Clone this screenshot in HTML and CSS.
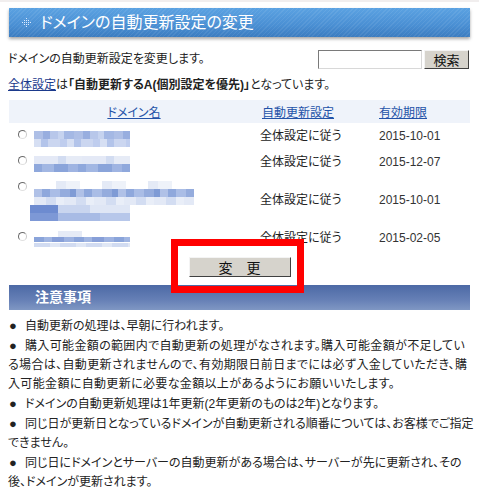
FILE: index.html
```html
<!DOCTYPE html>
<html lang="ja">
<head>
<meta charset="utf-8">
<title>ドメインの自動更新設定の変更</title>
<link rel="stylesheet" href="styles.css">
</head>
<body>
<div class="topline"></div>
<div class="page">
  <div class="title-bar">
    <svg class="title-icon" width="9" height="9" viewBox="0 0 9 9">
      <g fill="#dbeaff">
        <rect x="4" y="0" width="1" height="1"/>
        <rect x="2" y="2" width="1" height="1"/><rect x="4" y="2" width="1" height="1"/><rect x="6" y="2" width="1" height="1"/>
        <rect x="0" y="4" width="1" height="1"/><rect x="2" y="4" width="1" height="1"/><rect x="4" y="4" width="1" height="1"/><rect x="6" y="4" width="1" height="1"/><rect x="8" y="4" width="1" height="1"/>
        <rect x="2" y="6" width="1" height="1"/><rect x="4" y="6" width="1" height="1"/><rect x="6" y="6" width="1" height="1"/>
        <rect x="4" y="8" width="1" height="1"/>
      </g>
    </svg>
    <h1 class="title-text">ドメインの自動更新設定の変更</h1>
  </div>

  <div class="intro-row">
    <p class="intro-text">ドメインの自動更新設定を変更します。</p>
    <form class="search">
      <input class="search-input" type="text">
      <button class="search-btn" type="button">検索</button>
    </form>
  </div>

  <p class="status-line"><a class="link-dark" href="#">全体設定</a>は<b class="strong">「自動更新するA(個別設定を優先)」</b>となっています。</p>

  <div class="table">
    <div class="thead">
      <div class="th th-name"><a class="link" href="#">ドメイン名</a></div>
      <div class="th th-auto"><a class="link" href="#">自動更新設定</a></div>
      <div class="th th-date"><a class="link" href="#">有効期限</a></div>
    </div>

    <div class="tr">
      <div class="td-name"><span class="radio"></span><span class="blur blur-a"></span></div>
      <div class="td td-auto">全体設定に従う</div>
      <div class="td td-date">2015-10-01</div>
    </div>
    <div class="tr">
      <div class="td-name"><span class="radio"></span><span class="blur blur-b"></span></div>
      <div class="td td-auto">全体設定に従う</div>
      <div class="td td-date">2015-12-07</div>
    </div>
    <div class="tr tr-tall">
      <div class="td-name"><span class="radio"></span><span class="blur blur-c"><span class="blur-c-top"></span><span class="blur-c-bottom"></span></span></div>
      <div class="td td-auto">全体設定に従う</div>
      <div class="td td-date">2015-10-01</div>
    </div>
    <div class="tr">
      <div class="td-name"><span class="radio"></span><span class="blur blur-d"></span></div>
      <div class="td td-auto">全体設定に従う</div>
      <div class="td td-date">2015-02-05</div>
    </div>
  </div>

  <div class="submit-row">
    <div class="submit-wrap">
      <button class="submit-btn" type="button">変　更</button>
      <span class="highlight"></span>
    </div>
  </div>

  <div class="notice-bar">注意事項</div>
  <ul class="notes">
    <li><span class="bullet">●</span>自動更新の処理は、早朝に行われます。</li>
    <li class="wide"><span class="bullet">●</span>購入可能金額の範囲内で自動更新の処理がなされます。購入可能金額が不足してい<br>る場合は、自動更新されませんので、有効期限日前日までには必ず入金していただき、購<br>入可能金額に自動更新に必要な金額以上があるようにお願いいたします。</li>
    <li><span class="bullet">●</span>ドメインの自動更新処理は1年更新(2年更新のものは2年)となります。</li>
    <li><span class="bullet">●</span>同じ日が更新日となっているドメインが自動更新される順番については、お客様でご指定<br>できません。</li>
    <li><span class="bullet">●</span>同じ日にドメインとサーバーの自動更新がある場合は、サーバーが先に更新され、その<br>後、ドメインが更新されます。</li>
  </ul>
</div>
</body>
</html>
```

FILE: styles.css
```css
html, body {
  margin: 0;
  padding: 0;
  background: #ffffff;
}
body {
  font-family: "Liberation Sans", "Noto Sans CJK JP", sans-serif;
  font-size: 12px;
  color: #222222;
  font-feature-settings: "palt";
}
.topline {
  height: 2px;
  background: #f1eeee;
}
.page {
  width: 463px;
  margin: 0 0 0 8px;
  padding-top: 6px;
}
.title-bar {
  margin: 0 1px;
  height: 29px;
  display: flex;
  align-items: center;
  padding-left: 13px;
  gap: 9px;
  background:
    repeating-linear-gradient(135deg, rgba(255,255,255,0.07) 0 1px, rgba(255,255,255,0) 1px 3px),
    linear-gradient(#5ba2e2, #4a8fd3 60%, #3b7cc0);
  box-shadow: 0 2px 3px rgba(0, 0, 0, 0.35);
}
.title-icon {
  flex: none;
}
.title-text {
  margin: 0;
  font-size: 16px;
  font-weight: normal;
  color: #ffffff;
  line-height: 20px;
}
.intro-row {
  margin-top: 13px;
  height: 19px;
  display: flex;
  align-items: center;
  justify-content: space-between;
}
.intro-text {
  margin: 0;
  line-height: 19px;
}
.search {
  display: flex;
  gap: 2px;
  margin-right: 2px;
}
.search-input {
  box-sizing: border-box;
  width: 104px;
  height: 19px;
  margin: 0;
  padding: 0 2px;
  border: 1px solid;
  border-color: #7a7a7a #d8d8d8 #d8d8d8 #7a7a7a;
  background: #ffffff;
}
.search-btn {
  box-sizing: border-box;
  width: 45px;
  height: 19px;
  margin: 0;
  padding: 0;
  font-family: "Noto Sans CJK JP", sans-serif;
  font-size: 13px;
  line-height: 15px;
  color: #111111;
  background: #d6d3cc;
  border: 1px solid;
  border-color: #f4f4f4 #404040 #404040 #f4f4f4;
}
.status-line {
  margin: 7px 0 0 0;
  line-height: 19px;
}
.link-dark {
  color: #1b3a8c;
  text-decoration: underline;
}
.strong {
  font-weight: bold;
}
.link {
  color: #2352a8;
  text-decoration: underline;
}
.table {
  margin: 5px 1px 0 1px;
}
.thead {
  display: grid;
  grid-template-columns: 250px 119px 1fr;
  height: 23px;
  align-items: center;
  background: #eff3fa;
}
.th-name {
  text-align: center;
}
.th-auto {
  padding-left: 3px;
}
.th-date {
  padding-left: 1px;
}
.tr {
  display: grid;
  grid-template-columns: 250px 119px 1fr;
  height: 26px;
}
.tr-tall {
  height: 50px;
}
.td {
  align-self: center;
  line-height: 16px;
}
.td-auto {
  padding-left: 1px;
}
.td-date {
  padding-left: 1px;
  color: #333333;
}
.td-name {
  display: flex;
  align-items: flex-start;
  padding-top: 6px;
  padding-left: 9px;
  gap: 7px;
}
.radio {
  flex: none;
  box-sizing: border-box;
  width: 9px;
  height: 9px;
  margin-top: 1px;
  border-radius: 50%;
  border: 1px solid;
  border-color: #6a6a6a #c8c8c8 #e0e0e0 #6a6a6a;
  background: #ffffff;
}
.blur {
  display: block;
  width: 96px;
  height: 16px;
}
.blur-a {
  margin-top: 2px;
  background:
    repeating-linear-gradient(90deg, #aebfe6 0 9px, #98aedf 9px 16px, #b8c7ea 16px 24px, #c6d3ef 24px 30px, #a4b8e4 30px 40px) top / 100% 8px no-repeat,
    repeating-linear-gradient(90deg, #d6dff3 0 7px, #b3c4ea 7px 14px, #cbd6f0 14px 26px, #bfcdee 26px 33px) bottom / 100% 8px no-repeat;
}
.blur-b {
  margin-top: 1px;
  background:
    repeating-linear-gradient(90deg, #e4e9f6 0 24px, #d2dcf1 24px 32px, #e6ebf6 32px 48px) top / 100% 8px no-repeat,
    repeating-linear-gradient(90deg, #8fa8dc 0 8px, #a2b7e3 8px 20px, #8aa4da 20px 34px, #9fb4e2 34px 44px) bottom / 100% 8px no-repeat;
}
.blur-c {
  width: 160px;
  height: 40px;
  display: flex;
  flex-direction: column;
}
.blur-c-top {
  display: block;
  height: 24px;
  background:
    repeating-linear-gradient(90deg, #ffffff 0 22px, #e4eaf6 22px 32px, #eef2f9 32px 46px) top / 100% 8px no-repeat,
    repeating-linear-gradient(90deg, #b0c1e7 0 8px, #8fa8dc 8px 16px, #aabde6 16px 26px, #95acdd 26px 36px, #7f9bd5 36px 42px) center / 100% 8px no-repeat,
    repeating-linear-gradient(90deg, #e3e9f6 0 12px, #d3ddf2 12px 22px, #e9eef8 22px 30px) bottom / 100% 8px no-repeat;
}
.blur-c-bottom {
  display: block;
  width: 100px;
  height: 16px;
  margin-left: -4px;
  background:
    linear-gradient(90deg, #6d8bd0 0 28px, #c9d5ef 28px 60px, #dfe6f5 60px 100px) top / 100% 8px no-repeat,
    linear-gradient(90deg, #7d98d6 0 28px, #a8bbe5 28px 70px, #b7c7ea 70px 100px) bottom / 100% 8px no-repeat;
  box-shadow: -18px 4px 0 -3px #ffffff;
}
.blur-d {
  background:
    repeating-linear-gradient(90deg, #ffffff 0 24px, #e6ebf6 24px 48px, #ffffff 48px 96px) top / 100% 6px no-repeat,
    repeating-linear-gradient(90deg, #8aa4da 0 10px, #a0b5e2 10px 18px, #879fd8 18px 30px, #9db2e1 30px 40px) center / 100% 6px no-repeat,
    repeating-linear-gradient(90deg, #d1dbf1 0 16px, #e0e7f5 16px 26px) bottom / 100% 4px no-repeat;
}
.submit-row {
  display: flex;
  justify-content: center;
  margin-top: 6px;
}
.submit-wrap {
  position: relative;
}
.submit-btn {
  display: block;
  box-sizing: border-box;
  width: 102px;
  height: 20px;
  margin: 0;
  padding: 0;
  font-family: "Noto Sans CJK JP", sans-serif;
  font-size: 14px;
  line-height: 16px;
  color: #111111;
  background: #d6d3cc;
  border: 1px solid;
  border-color: #f4f4f4 #404040 #404040 #f4f4f4;
}
.highlight {
  position: absolute;
  top: -18px;
  left: -18px;
  right: -13px;
  bottom: -16px;
  border: 7px solid #ff0000;
  z-index: 2;
}
.notice-bar {
  margin: 8px 1px 0 1px;
  height: 25px;
  line-height: 25px;
  padding-left: 26px;
  font-size: 14px;
  font-weight: bold;
  color: #ffffff;
  background: linear-gradient(#4c69a5, #6680b6 60%, #7f97c3);
}
.notes {
  list-style: none;
  margin: 6px 0 0 0;
  padding: 0;
}
.notes li {
  line-height: 19px;
  white-space: nowrap;
}
.notes .wide {
  letter-spacing: 0.35px;
}
.bullet {
  display: inline-block;
  width: 17px;
  padding-left: 1px;
  box-sizing: border-box;
  font-size: 13px;
  letter-spacing: 0;
}
```
